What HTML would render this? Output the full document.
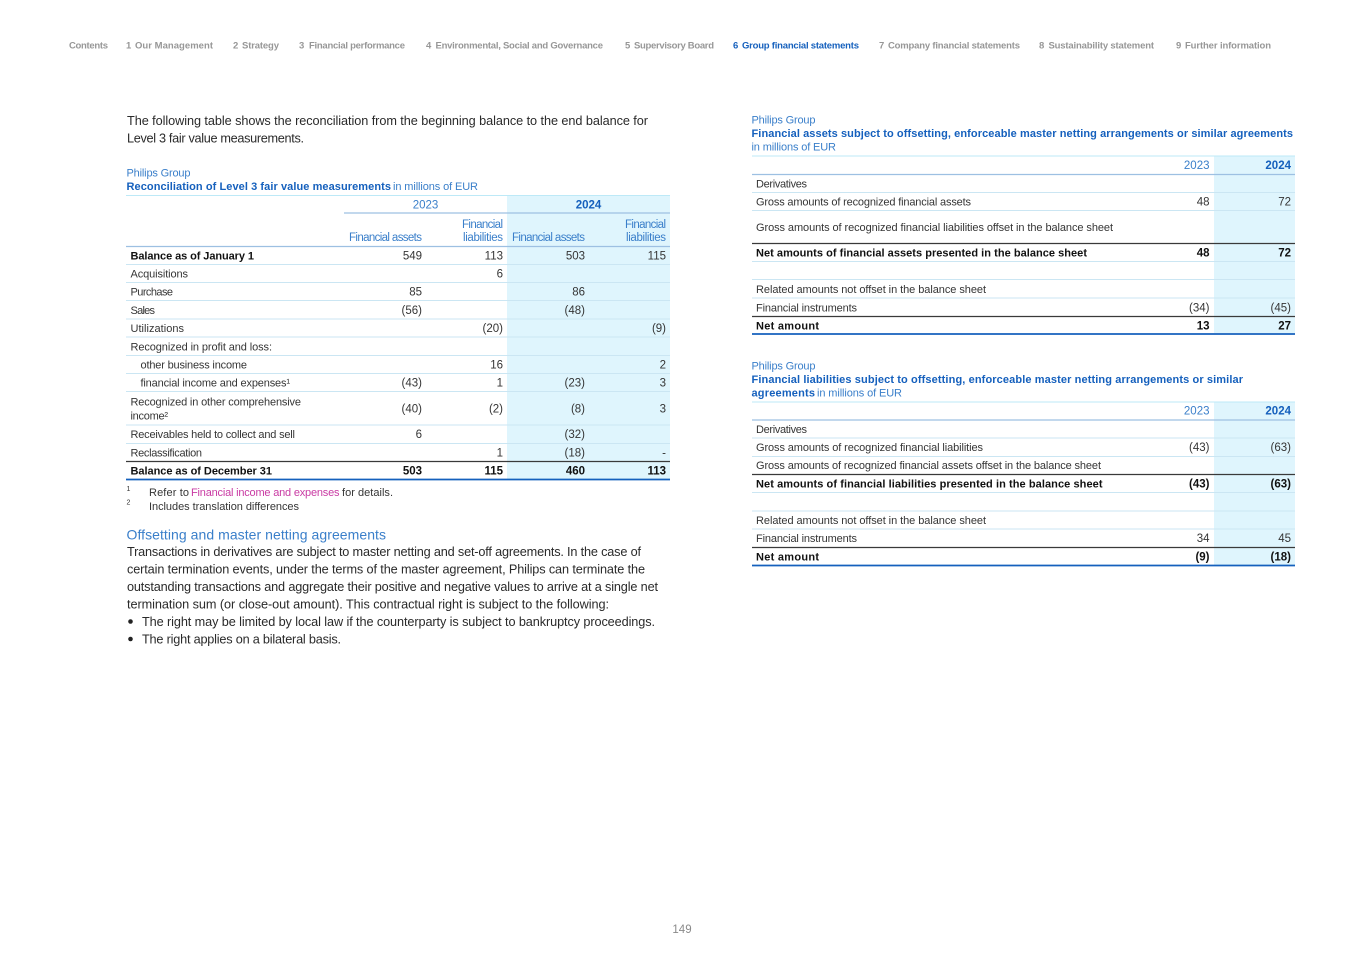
<!DOCTYPE html>
<html lang="en">
<head>
<meta charset="utf-8">
<title>Philips Annual Report - 149</title>
<style>
html,body{margin:0;padding:0;background:#fff;width:1365px;height:964px;overflow:hidden}
svg{display:block;font-family:"Liberation Sans",sans-serif}
.n{font-size:9.5px;font-weight:700;fill:#979797}
.na{font-size:9.5px;font-weight:700;fill:#1560bd}
.b{font-size:12.7px;fill:#2a2a2a}
.t{font-size:11px;fill:#353535}
.tb{font-size:11px;fill:#111;font-weight:700}
.h{font-size:11px;fill:#3a7fca}
.hb{font-size:11px;fill:#1560bd;font-weight:700}
.p{font-size:11px;fill:#c93aa3}
.e{text-anchor:end;font-size:11.5px}
.m{text-anchor:middle;font-size:11.5px}
.l{stroke:#cbe6f3;stroke-width:1}
.d{stroke:#9dc0e2;stroke-width:1.2}
.k{stroke:#3a3a3a;stroke-width:1.2}
.u{stroke:#1560bd;stroke-width:1.7}
.tp{stroke:#bde9f7;stroke-width:1}
</style>
</head>
<body>
<svg width="1365" height="964" viewBox="0 0 1365 964" xmlns="http://www.w3.org/2000/svg">
<!-- nav -->
<text class="n" x="69" y="48.5" textLength="39" lengthAdjust="spacing">Contents</text>
<text class="n" x="126" y="48.5">1</text><text class="n" x="135" y="48.5" textLength="78" lengthAdjust="spacing">Our Management</text>
<text class="n" x="233" y="48.5">2</text><text class="n" x="242" y="48.5" textLength="37" lengthAdjust="spacing">Strategy</text>
<text class="n" x="299" y="48.5">3</text><text class="n" x="309" y="48.5" textLength="96" lengthAdjust="spacing">Financial performance</text>
<text class="n" x="426" y="48.5">4</text><text class="n" x="435.500" y="48.5" textLength="167.500" lengthAdjust="spacing">Environmental, Social and Governance</text>
<text class="n" x="625" y="48.5">5</text><text class="n" x="634" y="48.5" textLength="80" lengthAdjust="spacing">Supervisory Board</text>
<text class="na" x="733" y="48.5">6</text><text class="na" x="742" y="48.5" textLength="117" lengthAdjust="spacing">Group financial statements</text>
<text class="n" x="879" y="48.5">7</text><text class="n" x="888" y="48.5" textLength="132" lengthAdjust="spacing">Company financial statements</text>
<text class="n" x="1039" y="48.5">8</text><text class="n" x="1048.500" y="48.5" textLength="105.500" lengthAdjust="spacing">Sustainability statement</text>
<text class="n" x="1176" y="48.5">9</text><text class="n" x="1185" y="48.5" textLength="86" lengthAdjust="spacing">Further information</text>

<!-- intro -->
<text class="b" x="127" y="125" textLength="521" lengthAdjust="spacing">The following table shows the reconciliation from the beginning balance to the end balance for</text>
<text class="b" x="127" y="142.5" textLength="177" lengthAdjust="spacing">Level 3 fair value measurements.</text>

<!-- table 1 title -->
<text class="h" x="126.500" y="176.500" textLength="64" lengthAdjust="spacing">Philips Group</text>
<text class="hb" x="126.500" y="190" textLength="264.500" lengthAdjust="spacing">Reconciliation of Level 3 fair value measurements</text>
<text class="h" x="393" y="190" textLength="85" lengthAdjust="spacing">in millions of EUR</text>

<!-- table 1 -->
<rect x="507" y="195" width="163" height="284" fill="#dff5fd"/>
<line class="tp" x1="126" x2="670" y1="195.500" y2="195.500"/>
<line class="d" x1="344" x2="670" y1="213" y2="213"/>
<line class="d" x1="126" x2="670" y1="246.500" y2="246.500"/>
<line class="l" x1="126" x2="670" y1="264.500" y2="264.500"/>
<line class="l" x1="126" x2="670" y1="282.500" y2="282.500"/>
<line class="l" x1="126" x2="670" y1="300.500" y2="300.500"/>
<line class="l" x1="126" x2="670" y1="319" y2="319"/>
<line class="l" x1="126" x2="670" y1="337" y2="337"/>
<line class="l" x1="126" x2="670" y1="355.500" y2="355.500"/>
<line class="l" x1="126" x2="670" y1="373.500" y2="373.500"/>
<line class="l" x1="126" x2="670" y1="391.500" y2="391.500"/>
<line class="l" x1="126" x2="670" y1="425" y2="425"/>
<line class="l" x1="126" x2="670" y1="443.500" y2="443.500"/>
<line class="k" x1="126" x2="670" y1="461.500" y2="461.500"/>
<line class="u" x1="126" x2="670" y1="479.500" y2="479.500"/>

<text class="h m" x="425.500" y="208.500">2023</text>
<text class="hb m" x="588.500" y="208.500">2024</text>
<text class="h e" x="422" y="241" textLength="73" lengthAdjust="spacing">Financial assets</text>
<text class="h e" x="503" y="228" textLength="41" lengthAdjust="spacing">Financial</text>
<text class="h e" x="503" y="241" textLength="40" lengthAdjust="spacing">liabilities</text>
<text class="h e" x="585" y="241" textLength="73" lengthAdjust="spacing">Financial assets</text>
<text class="h e" x="666" y="228" textLength="41" lengthAdjust="spacing">Financial</text>
<text class="h e" x="666" y="241" textLength="40" lengthAdjust="spacing">liabilities</text>

<text class="tb" x="130.500" y="259.500" textLength="123.500" lengthAdjust="spacing">Balance as of January 1</text>
<text class="t e" x="422" y="259.500">549</text><text class="t e" x="503" y="259.500">113</text><text class="t e" x="585" y="259.500">503</text><text class="t e" x="666" y="259.500">115</text>

<text class="t" x="130.500" y="277.500" textLength="57.500" lengthAdjust="spacing">Acquisitions</text>
<text class="t e" x="503" y="277.500">6</text>

<text class="t" x="130.500" y="295.500" textLength="42.500" lengthAdjust="spacing">Purchase</text>
<text class="t e" x="422" y="295.500">85</text><text class="t e" x="585" y="295.500">86</text>

<text class="t" x="130.500" y="314" textLength="24.500" lengthAdjust="spacing">Sales</text>
<text class="t e" x="422" y="314">(56)</text><text class="t e" x="585" y="314">(48)</text>

<text class="t" x="130.500" y="332" textLength="53.500" lengthAdjust="spacing">Utilizations</text>
<text class="t e" x="503" y="332">(20)</text><text class="t e" x="666" y="332">(9)</text>

<text class="t" x="130.500" y="350.500" textLength="141.500" lengthAdjust="spacing">Recognized in profit and loss:</text>

<text class="t" x="140.500" y="368.500" textLength="106.500" lengthAdjust="spacing">other business income</text>
<text class="t e" x="503" y="368.500">16</text><text class="t e" x="666" y="368.500">2</text>

<text class="t" x="140.500" y="386.500" textLength="149.500" lengthAdjust="spacing">financial income and expenses¹</text>
<text class="t e" x="422" y="386.500">(43)</text><text class="t e" x="503" y="386.500">1</text><text class="t e" x="585" y="386.500">(23)</text><text class="t e" x="666" y="386.500">3</text>

<text class="t" x="130.500" y="405.500" textLength="170.500" lengthAdjust="spacing">Recognized in other comprehensive</text>
<text class="t" x="130.500" y="419.500" textLength="37.500" lengthAdjust="spacing">income²</text>
<text class="t e" x="422" y="412.500">(40)</text><text class="t e" x="503" y="412.500">(2)</text><text class="t e" x="585" y="412.500">(8)</text><text class="t e" x="666" y="412.500">3</text>

<text class="t" x="130.500" y="438" textLength="164.500" lengthAdjust="spacing">Receivables held to collect and sell</text>
<text class="t e" x="422" y="438">6</text><text class="t e" x="585" y="438">(32)</text>

<text class="t" x="130.500" y="456.500" textLength="71.500" lengthAdjust="spacing">Reclassification</text>
<text class="t e" x="503" y="456.500">1</text><text class="t e" x="585" y="456.500">(18)</text><text class="t e" x="666" y="456.500">-</text>

<text class="tb" x="130.500" y="474.500" textLength="141.500" lengthAdjust="spacing">Balance as of December 31</text>
<text class="tb e" x="422" y="474.500">503</text><text class="tb e" x="503" y="474.500">115</text><text class="tb e" x="585" y="474.500">460</text><text class="tb e" x="666" y="474.500">113</text>

<!-- footnotes -->
<text x="126.500" y="491" font-size="7" fill="#333">1</text>
<text class="t" x="149" y="496" textLength="40" lengthAdjust="spacing">Refer to</text>
<text class="p" x="191" y="496" textLength="148.500" lengthAdjust="spacing">Financial income and expenses</text>
<text class="t" x="342" y="496" textLength="51" lengthAdjust="spacing">for details.</text>
<text x="126.500" y="504.500" font-size="7" fill="#333">2</text>
<text class="t" x="149" y="510" textLength="150" lengthAdjust="spacing">Includes translation differences</text>

<!-- section -->
<text x="126.500" y="539.500" font-size="14" fill="#3a7fca" textLength="259.500" lengthAdjust="spacing">Offsetting and master netting agreements</text>
<text class="b" x="127" y="556" textLength="514" lengthAdjust="spacing">Transactions in derivatives are subject to master netting and set-off agreements. In the case of</text>
<text class="b" x="127" y="573.500" textLength="518" lengthAdjust="spacing">certain termination events, under the terms of the master agreement, Philips can terminate the</text>
<text class="b" x="127" y="591" textLength="531" lengthAdjust="spacing">outstanding transactions and aggregate their positive and negative values to arrive at a single net</text>
<text class="b" x="127" y="608.500" textLength="482" lengthAdjust="spacing">termination sum (or close-out amount). This contractual right is subject to the following:</text>
<circle cx="130.500" cy="621.500" r="2.300" fill="#222"/>
<text class="b" x="142" y="626" textLength="513" lengthAdjust="spacing">The right may be limited by local law if the counterparty is subject to bankruptcy proceedings.</text>
<circle cx="130.500" cy="639" r="2.300" fill="#222"/>
<text class="b" x="142" y="643.500" textLength="199" lengthAdjust="spacing">The right applies on a bilateral basis.</text>

<!-- table 2 -->
<text class="h" x="751.500" y="123.500" textLength="64" lengthAdjust="spacing">Philips Group</text>
<text class="hb" x="751.500" y="137" textLength="541.500" lengthAdjust="spacing">Financial assets subject to offsetting, enforceable master netting arrangements or similar agreements</text>
<text class="h" x="751.500" y="150.500" textLength="84.500" lengthAdjust="spacing">in millions of EUR</text>

<rect x="1214" y="156" width="81" height="177" fill="#dff5fd"/>
<line class="tp" x1="752" x2="1295" y1="156" y2="156"/>
<line class="d" x1="752" x2="1295" y1="174.500" y2="174.500"/>
<line class="l" x1="752" x2="1295" y1="192.500" y2="192.500"/>
<line class="l" x1="752" x2="1295" y1="210.500" y2="210.500"/>
<line class="k" x1="752" x2="1295" y1="243.500" y2="243.500"/>
<line class="l" x1="752" x2="1295" y1="261.500" y2="261.500"/>
<line class="l" x1="752" x2="1295" y1="279.500" y2="279.500"/>
<line class="l" x1="752" x2="1295" y1="298" y2="298"/>
<line class="k" x1="752" x2="1295" y1="316.500" y2="316.500"/>
<line class="u" x1="752" x2="1295" y1="334" y2="334"/>

<text class="h e" x="1209.500" y="169">2023</text>
<text class="hb e" x="1291" y="169">2024</text>
<text class="t" x="756" y="187.500" textLength="51" lengthAdjust="spacing">Derivatives</text>
<text class="t" x="756" y="205.500" textLength="215" lengthAdjust="spacing">Gross amounts of recognized financial assets</text>
<text class="t e" x="1209.500" y="205.500">48</text><text class="t e" x="1291" y="205.500">72</text>
<text class="t" x="756" y="231" textLength="357" lengthAdjust="spacing">Gross amounts of recognized financial liabilities offset in the balance sheet</text>
<text class="tb" x="756" y="256.500" textLength="331" lengthAdjust="spacing">Net amounts of financial assets presented in the balance sheet</text>
<text class="tb e" x="1209.500" y="256.500">48</text><text class="tb e" x="1291" y="256.500">72</text>
<text class="t" x="756" y="293" textLength="230" lengthAdjust="spacing">Related amounts not offset in the balance sheet</text>
<text class="t" x="756" y="311.500" textLength="101" lengthAdjust="spacing">Financial instruments</text>
<text class="t e" x="1209.500" y="311.500">(34)</text><text class="t e" x="1291" y="311.500">(45)</text>
<text class="tb" x="756" y="329.500" textLength="63" lengthAdjust="spacing">Net amount</text>
<text class="tb e" x="1209.500" y="329.500">13</text><text class="tb e" x="1291" y="329.500">27</text>

<!-- table 3 -->
<text class="h" x="751.500" y="369.500" textLength="64" lengthAdjust="spacing">Philips Group</text>
<text class="hb" x="751.500" y="383" textLength="491.500" lengthAdjust="spacing">Financial liabilities subject to offsetting, enforceable master netting arrangements or similar</text>
<text class="hb" x="751.500" y="396.500" textLength="63.500" lengthAdjust="spacing">agreements</text>
<text class="h" x="817" y="396.500" textLength="85" lengthAdjust="spacing">in millions of EUR</text>

<rect x="1214" y="402" width="81" height="163" fill="#dff5fd"/>
<line class="tp" x1="752" x2="1295" y1="402" y2="402"/>
<line class="d" x1="752" x2="1295" y1="420" y2="420"/>
<line class="l" x1="752" x2="1295" y1="438" y2="438"/>
<line class="l" x1="752" x2="1295" y1="456.500" y2="456.500"/>
<line class="k" x1="752" x2="1295" y1="474.500" y2="474.500"/>
<line class="l" x1="752" x2="1295" y1="492.500" y2="492.500"/>
<line class="l" x1="752" x2="1295" y1="511" y2="511"/>
<line class="l" x1="752" x2="1295" y1="529" y2="529"/>
<line class="k" x1="752" x2="1295" y1="547.500" y2="547.500"/>
<line class="u" x1="752" x2="1295" y1="565.500" y2="565.500"/>

<text class="h e" x="1209.500" y="414.500">2023</text>
<text class="hb e" x="1291" y="414.500">2024</text>
<text class="t" x="756" y="433" textLength="51" lengthAdjust="spacing">Derivatives</text>
<text class="t" x="756" y="451" textLength="227" lengthAdjust="spacing">Gross amounts of recognized financial liabilities</text>
<text class="t e" x="1209.500" y="451">(43)</text><text class="t e" x="1291" y="451">(63)</text>
<text class="t" x="756" y="469" textLength="345" lengthAdjust="spacing">Gross amounts of recognized financial assets offset in the balance sheet</text>
<text class="tb" x="756" y="487.500" textLength="346.500" lengthAdjust="spacing">Net amounts of financial liabilities presented in the balance sheet</text>
<text class="tb e" x="1209.500" y="487.500">(43)</text><text class="tb e" x="1291" y="487.500">(63)</text>
<text class="t" x="756" y="524" textLength="230" lengthAdjust="spacing">Related amounts not offset in the balance sheet</text>
<text class="t" x="756" y="542" textLength="101" lengthAdjust="spacing">Financial instruments</text>
<text class="t e" x="1209.500" y="542">34</text><text class="t e" x="1291" y="542">45</text>
<text class="tb" x="756" y="560.500" textLength="63" lengthAdjust="spacing">Net amount</text>
<text class="tb e" x="1209.500" y="560.500">(9)</text><text class="tb e" x="1291" y="560.500">(18)</text>

<!-- page number -->
<text x="682" y="933" text-anchor="middle" font-size="11.500" fill="#8a8a8a">149</text>
</svg>
</body>
</html>
